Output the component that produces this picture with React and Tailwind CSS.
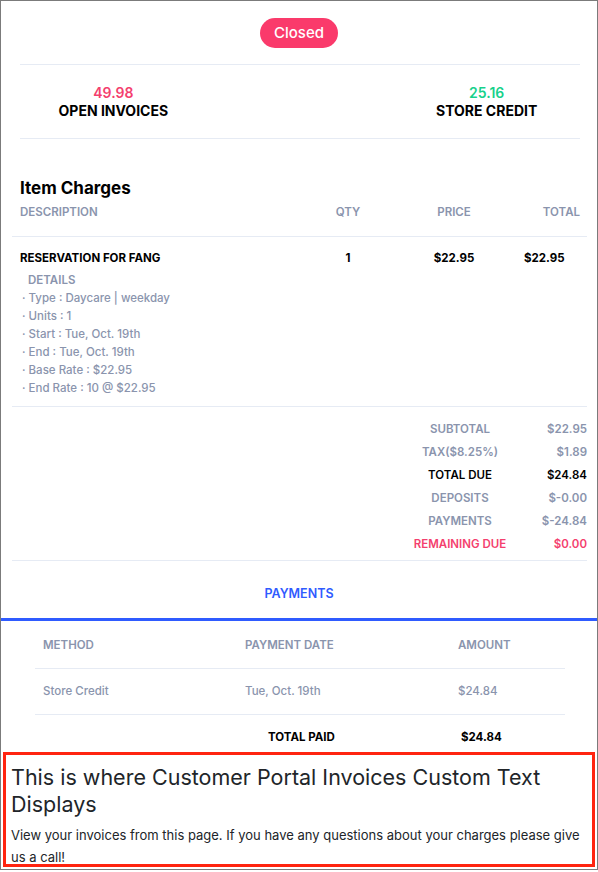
import React from 'react';

const details = [
  ['Type', 'Daycare | weekday'],
  ['Units', '1'],
  ['Start', 'Tue, Oct. 19th'],
  ['End', 'Tue, Oct. 19th'],
  ['Base Rate', '$22.95'],
  ['End Rate', '10 @ $22.95'],
];

const totals = [
  { label: 'SUBTOTAL', value: '$22.95', tone: 'text-[#8a94ad]' },
  { label: 'TAX($8.25%)', value: '$1.89', tone: 'text-[#8a94ad]' },
  { label: 'TOTAL DUE', value: '$24.84', tone: 'text-black' },
  { label: 'DEPOSITS', value: '$-0.00', tone: 'text-[#8a94ad]' },
  { label: 'PAYMENTS', value: '$-24.84', tone: 'text-[#8a94ad]' },
  { label: 'REMAINING DUE', value: '$0.00', tone: 'text-[#f43f6e]' },
];

function Line({ wide }) {
  return wide
    ? <div className="ml-[11px] w-[575px] h-px bg-[#e6ebf4]" />
    : <div className="ml-[19px] w-[560px] h-px bg-[#e6ebf4]" />;
}

export default function App() {
  return (
    <div className="w-[598px] h-[872px] bg-white font-['Inter',sans-serif] antialiased">
      <div className="h-[870px] border border-[#7b7b7b] flex flex-col overflow-hidden">
        {/* status */}
        <div className="pt-[17px] flex justify-center">
          <span className="h-[30px] w-[78px] rounded-full bg-[#fa3a6b] text-white text-[15px] font-medium flex items-center justify-center">
            Closed
          </span>
        </div>
        <div className="mt-[16px]"><Line /></div>

        {/* balances */}
        <div className="ml-[19px] w-[560px] grid grid-cols-3 pt-[19px] pb-[18px]">
          <div className="flex flex-col items-center">
            <span className="h-[18px] leading-[18px] text-[14px] font-semibold text-[#f43f6e]">49.98</span>
            <span className="h-[18px] leading-[18px] text-[14px] font-bold text-black">OPEN INVOICES</span>
          </div>
          <div />
          <div className="flex flex-col items-center">
            <span className="h-[18px] leading-[18px] text-[14px] font-semibold text-[#17d18b]">25.16</span>
            <span className="h-[18px] leading-[18px] text-[14px] font-bold text-black">STORE CREDIT</span>
          </div>
        </div>
        <Line />

        {/* item charges */}
        <h2 className="mt-[37px] ml-[19px] h-[24px] leading-[24px] text-[17px] font-bold text-black">Item Charges</h2>
        <div className="mt-[1px] ml-[19px] w-[560px] h-[24px] flex items-center text-[11.5px] font-semibold text-[#8a94ad]">
          <div className="w-[280px]">DESCRIPTION</div>
          <div className="w-[96px] text-center">QTY</div>
          <div className="w-[116px] text-center">PRICE</div>
          <div className="flex-1 text-right">TOTAL</div>
        </div>
        <div className="mt-[11px]"><Line wide /></div>

        <div className="mt-[12px] ml-[19px] w-[560px] h-[20px] flex items-center text-[11.5px] font-bold text-black">
          <div className="w-[280px]">RESERVATION FOR FANG</div>
          <div className="w-[96px] text-center">1</div>
          <div className="w-[116px] text-center">$22.95</div>
          <div className="flex-1 pl-[12px]">$22.95</div>
        </div>
        <div className="mt-[2px] ml-[27px] h-[18px] leading-[18px] text-[11.5px] font-semibold text-[#8a94ad]">DETAILS</div>
        <div className="ml-[21px] flex flex-col text-[11.5px] font-medium text-[#8a94ad]">
          {details.map(([k, v]) => (
            <div key={k} className="h-[18px] leading-[18px]">· {k} : {v}</div>
          ))}
        </div>
        <div className="mt-[9px]"><Line wide /></div>

        {/* totals */}
        <div className="mt-[11px] flex flex-col">
          {totals.map((t) => (
            <div key={t.label} className={`h-[23px] flex items-center text-[11.5px] font-semibold ${t.tone}`}>
              <div className="ml-[394px] w-[130px] text-center">{t.label}</div>
              <div className="w-[62px] text-right">{t.value}</div>
            </div>
          ))}
        </div>
        <div className="mt-[4px]"><Line wide /></div>

        {/* payments */}
        <div className="mt-[23px] h-[20px] leading-[20px] text-center text-[12.5px] font-semibold text-[#2f5bff]">PAYMENTS</div>
        <div className="mt-[14px] h-[3px] bg-[#2f5bff]" />

        <div className="ml-[34px] w-[530px] flex flex-col text-[11.5px]">
          <div className="mt-[13px] h-[24px] flex items-center font-semibold text-[#8a94ad]">
            <div className="w-[210px] pl-[8px]">METHOD</div>
            <div className="w-[213px]">PAYMENT DATE</div>
            <div className="flex-1">AMOUNT</div>
          </div>
          <div className="mt-[10px] h-px bg-[#e6ebf4]" />
          <div className="mt-[11px] h-[24px] flex items-center font-medium text-[#8a94ad]">
            <div className="w-[210px] pl-[8px]">Store Credit</div>
            <div className="w-[213px]">Tue, Oct. 19th</div>
            <div className="flex-1">$24.84</div>
          </div>
          <div className="mt-[10px] h-px bg-[#e6ebf4]" />
          <div className="mt-[11px] h-[24px] flex items-center font-bold text-black">
            <div className="w-[210px]" />
            <div className="w-[213px] pl-[23px]">TOTAL PAID</div>
            <div className="flex-1 pl-[3px]">$24.84</div>
          </div>
        </div>

        {/* custom text */}
        <div className="mt-[2px] ml-[2px] w-[592px] h-[115px] border-[3px] border-[#ff2410] pl-[5px] pt-[9px] overflow-hidden text-[#212529]">
          <h3 className="text-[21.5px] leading-[27px] font-normal">This is where Customer Portal Invoices Custom Text Displays</h3>
          <p className="mt-[6px] text-[13px] leading-[22px]">
            View your invoices from this page. If you have any questions about your charges please give us a call!
          </p>
        </div>
      </div>
    </div>
  );
}
